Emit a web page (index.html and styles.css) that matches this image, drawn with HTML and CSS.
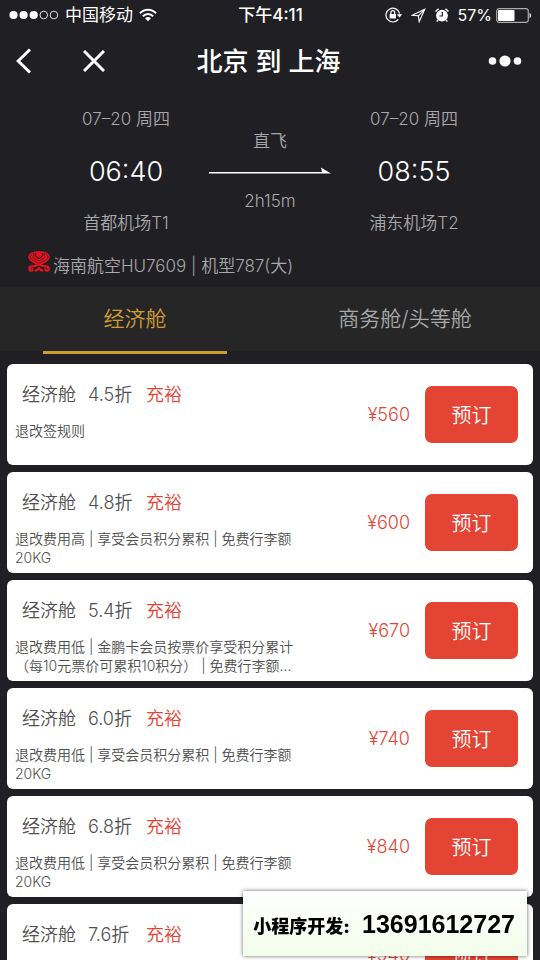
FILE: index.html
```
<!DOCTYPE html>
<html lang="zh-CN">
<head>
<meta charset="utf-8">
<meta name="viewport" content="width=device-width, initial-scale=1">
<title>北京 到 上海</title>
<link rel="stylesheet" href="styles.css">
</head>
<body>
<div class="app">
  <div class="status">
    <div class="status-side">
      <svg class="signal" width="50" height="10" viewBox="0 0 50 10" aria-hidden="true">
        <g fill="#fff"><circle cx="4.5" cy="5" r="4.1"/><circle cx="14.6" cy="5" r="4.1"/><circle cx="24.7" cy="5" r="4.1"/></g>
        <g fill="none" stroke="#ddd" stroke-width="1"><circle cx="34.8" cy="5" r="3.8"/><circle cx="44.9" cy="5" r="3.8"/></g>
      </svg>
      <span>中国移动</span>
      <svg width="18" height="14" viewBox="0 0 18 14" fill="none" stroke="#fff" stroke-width="2.1" aria-hidden="true">
        <path d="M1 5.3C5.5.5 12.500.5 17 5.300M3.900 8.200c2.900-3 7.300-3 10.200 0"/>
        <path d="M9 13.300l-3-3.100c1.700-1.600 4.300-1.600 6 0z" fill="#fff" stroke="none"/>
      </svg>
    </div>
    <span class="clock">下午4:11</span>
    <div class="status-side status-right">
      <svg width="18" height="16" viewBox="0 0 18 16" aria-hidden="true">
        <path d="M13.300 12.400A6.900 6.900 0 1 1 14.600 6.500" fill="none" stroke="#fff" stroke-width="1.200"/>
        <path d="M11.800 7.200h5.400L14.500 10.400z" fill="#fff"/>
        <rect x="4.600" y="7" width="6.400" height="4.600" rx=".6" fill="#fff"/>
        <path d="M5.900 7V5.600a1.900 1.900 0 0 1 3.800 0V7" fill="none" stroke="#fff" stroke-width="1.200"/>
      </svg>
      <svg width="15" height="15" viewBox="0 0 15 15" fill="none" stroke="#fff" stroke-width="1.100" aria-hidden="true"><path d="M13.700 1.300L1.200 7.300l6.100.5.9 5.900z"/><path d="M13.700 1.300L7.300 7.800"/></svg>
      <svg width="16" height="16" viewBox="0 0 16 16" aria-hidden="true">
        <circle cx="8" cy="8.600" r="5.900" fill="#fff"/>
        <path d="M1.600 4.400a12 12 0 0 1 3-2.600M14.400 4.400a12 12 0 0 0-3-2.600M4 13l-1.300 1.500M12 13l1.300 1.500" stroke="#fff" stroke-width="1.500" fill="none"/>
        <path d="M8.300 5v4H5.300" fill="none" stroke="#222126" stroke-width="1.200"/>
      </svg>
      <span class="percent">57%</span>
      <svg class="battery" width="36" height="15" viewBox="0 0 36 15" aria-hidden="true">
        <rect x=".7" y=".7" width="31.600" height="13.600" rx="2.500" fill="none" stroke="#aaa" stroke-width="1.200"/>
        <rect x="2" y="2" width="16.500" height="11" rx="1" fill="#fff"/>
        <path d="M33.500 5c2.200.5 2.200 4.500 0 5z" fill="#ddd"/>
      </svg>
    </div>
  </div>

  <header class="nav">
    <div class="nav-side">
      <button class="icon-btn" type="button" aria-label="返回"><svg width="16" height="26" viewBox="0 0 16 26" fill="none" stroke="#fff" stroke-width="3"><path d="M15 1.500L3.200 13 15 24.500"/></svg></button>
      <button class="icon-btn" type="button" aria-label="关闭"><svg width="22" height="22" viewBox="0 0 22 22" fill="none" stroke="#fff" stroke-width="3"><path d="M1 1l20 20M21 1L1 21"/></svg></button>
    </div>
    <h1>北京 到 上海</h1>
    <div class="nav-side nav-right">
      <button class="icon-btn" type="button" aria-label="更多"><svg width="34" height="12" viewBox="0 0 34 12" fill="#fff"><circle cx="4.500" cy="6" r="3.800"/><circle cx="17" cy="6" r="5.600"/><circle cx="29.500" cy="6" r="3.800"/></svg></button>
    </div>
  </header>

  <section class="flight">
    <div class="route">
      <div class="stop"><span>07–20 周四</span><strong>06:40</strong><span>首都机场T1</span></div>
      <div class="leg">
        <span>直飞</span>
        <svg width="122" height="8" viewBox="0 0 122 8" aria-hidden="true"><path d="M0 5h113l-1-4.500L122 6.500H0z" fill="#fff"/></svg>
        <span>2h15m</span>
      </div>
      <div class="stop"><span>07–20 周四</span><strong>08:55</strong><span>浦东机场T2</span></div>
    </div>
    <div class="airline">
      <svg width="22" height="21" viewBox="0 0 22 21" fill="none" aria-hidden="true">
        <path d="M7 .6C2.500 1.200 0 3.800.3 6.500c.3 3 3.700 4.800 10.700 8.300 7-3.500 10.400-5.300 10.700-8.300C22 3.800 19.500 1.200 15 .6 12.500 0 9.500 0 7 .6z" fill="#e8131c"/>
        <path d="M6.300 1.900C2.800 3 1.300 5.300 2.600 7.400c1.200 1.800 4.400 2.800 8.400 4.900 4-2.100 7.200-3.100 8.400-4.900 1.300-2.100-.2-4.400-3.700-5.500" stroke="#201f24" stroke-width=".6"/>
        <path d="M6.800 3.400c-2 1.100-2.300 2.800-.8 3.900C7.200 8.200 9 8.800 11 9.800c2-1 3.800-1.600 5-2.500 1.500-1.100 1.200-2.800-.8-3.900" stroke="#201f24" stroke-width=".6"/>
        <path d="M7.600 1.800c-.8 3.200 1 4.800 3.400 5.600 2.400-.8 4.200-2.400 3.400-5.600" stroke="#201f24" stroke-width="1.100"/>
        <path d="M11 13c-2.500 2-5 2.700-7.500 2.300-2.700.3-3 4.300-.4 4.400 1.600 0 1.900-1.600.8-2M11 13c2.500 2 5 2.700 7.500 2.300 2.700.3 3 4.300.4 4.400-1.600 0-1.900-1.600-.8-2M6.800 19.200c1.800.9 3-.3 4.200-2 1.200 1.700 2.400 2.900 4.200 2" stroke="#e8131c" stroke-width="2.200"/>
      </svg>
      <span>海南航空HU7609 | 机型787(大)</span>
    </div>
  </section>

  <nav class="tabs">
    <button class="tab tab-on" type="button">经济舱</button>
    <button class="tab" type="button">商务舱/头等舱</button>
  </nav>

  <main class="fares">
    <article class="fare">
      <div class="info"><h2><span>经济舱</span><span class="rate">4.5折</span><em>充裕</em></h2><p>退改签规则</p></div>
      <span class="price">¥560</span><button class="book" type="button">预订</button>
    </article>
    <article class="fare">
      <div class="info"><h2><span>经济舱</span><span class="rate">4.8折</span><em>充裕</em></h2><p>退改费用高 | 享受会员积分累积 | 免费行李额20KG</p></div>
      <span class="price">¥600</span><button class="book" type="button">预订</button>
    </article>
    <article class="fare">
      <div class="info"><h2><span>经济舱</span><span class="rate">5.4折</span><em>充裕</em></h2><p>退改费用低 | 金鹏卡会员按票价享受积分累计（每10元票价可累积10积分） | 免费行李额20KG</p></div>
      <span class="price">¥670</span><button class="book" type="button">预订</button>
    </article>
    <article class="fare">
      <div class="info"><h2><span>经济舱</span><span class="rate">6.0折</span><em>充裕</em></h2><p>退改费用低 | 享受会员积分累积 | 免费行李额20KG</p></div>
      <span class="price">¥740</span><button class="book" type="button">预订</button>
    </article>
    <article class="fare">
      <div class="info"><h2><span>经济舱</span><span class="rate">6.8折</span><em>充裕</em></h2><p>退改费用低 | 享受会员积分累积 | 免费行李额20KG</p></div>
      <span class="price">¥840</span><button class="book" type="button">预订</button>
    </article>
    <article class="fare">
      <div class="info"><h2><span>经济舱</span><span class="rate">7.6折</span><em>充裕</em></h2></div>
      <span class="price">¥940</span><button class="book" type="button">预订</button>
    </article>
  </main>
</div>
<aside class="contact"><span>小程序开发:</span><b>13691612727</b></aside>
</body>
</html>
```
FILE: styles.css
```
* { box-sizing: border-box; }

body {
  margin: 0;
  background: #201f24;
  color: #a8a8aa;
  font-family: Inter, "Noto Sans CJK SC", sans-serif;
  font-weight: 350;
}

button {
  border: 0;
  padding: 0;
  background: none;
  color: inherit;
  font: inherit;
}

svg { display: block; flex: none; }

.app { height: 100vh; overflow: hidden; }

.status {
  display: flex;
  align-items: center;
  height: 30px;
  padding: 0 8px 0 9px;
  color: #fff;
  font-size: 17px;
  font-weight: 400;
  line-height: 20px;
}

.status-side { display: flex; flex: 1; align-items: center; gap: 6px; }
.status-right { justify-content: flex-end; gap: 8px; }
.percent { font-size: 16px; }
.battery { margin-left: -4px; }
.clock { font-weight: 500; }

.nav {
  display: flex;
  align-items: center;
  height: 62px;
  padding: 0 18px 0 15px;
  color: #fff;
}

.nav-side { display: flex; flex: 1; align-items: center; gap: 52px; }
.nav-right { justify-content: flex-end; }
.nav h1 { margin: 0; padding-bottom: 3px; font-size: 26px; font-weight: 500; }

.flight { padding: 14px 43px 0; font-size: 17px; }
.route { display: flex; }
.stop, .leg { display: flex; flex-direction: column; align-items: center; }
.stop { flex: 1; line-height: 26px; }
.stop strong { margin: 20px 0 18px; color: #fff; font-size: 27px; font-weight: 350; line-height: 40px; }
.leg { padding-top: 22px; line-height: 26px; gap: 13px; }

.airline { display: flex; align-items: center; gap: 3px; height: 34px; margin: 11px 0 6px -15px; }
.airline svg { margin-bottom: 6px; }

.tabs { display: flex; height: 64px; background: #262626; font-size: 21px; }
.tab { position: relative; flex: 1; padding-bottom: 4px; color: #a8a8aa; }
.tab-on { color: #cf9c31; }
.tab-on::after {
  content: "";
  position: absolute;
  top: 100%;
  left: 16%;
  right: 16%;
  height: 3px;
  background: #cf9c31;
}

.fares { display: grid; gap: 7px; padding: 13px 7px; }

.fare {
  display: flex;
  align-items: center;
  height: 101px;
  padding: 0 15px 0 8px;
  border-radius: 6px;
  background: #fff;
  color: #505050;
}

.info { flex: 1; align-self: stretch; min-width: 0; padding-top: 18px; }
.info h2 { display: flex; gap: 12px; margin: 0 0 13px 7px; font-size: 18px; font-weight: 350; line-height: 26px; }
.info .rate { min-width: 46px; }
.info em { color: #e44434; font-style: normal; }
.info p {
  display: -webkit-box;
  max-width: 288px;
  margin: 0;
  overflow: hidden;
  font-size: 14px;
  line-height: 19px;
  -webkit-box-orient: vertical;
  -webkit-line-clamp: 2;
}

.price { margin-right: 15px; color: #e44434; font-size: 18px; }

.book {
  width: 93px;
  height: 57px;
  border-radius: 7px;
  background: #e44434;
  color: #fff;
  font-size: 20px;
}

.contact {
  position: fixed;
  right: 13px;
  bottom: 4px;
  display: flex;
  align-items: center;
  gap: 12px;
  height: 65px;
  padding: 2px 12px 0 10px;
  background: linear-gradient(#fff, #f2fdea);
  box-shadow: 0 0 4px rgba(0, 0, 0, .6);
  color: #000;
  font-size: 18px;
  font-weight: 900;
}
.contact b { font: bold 25px "Liberation Sans", sans-serif; }
```
